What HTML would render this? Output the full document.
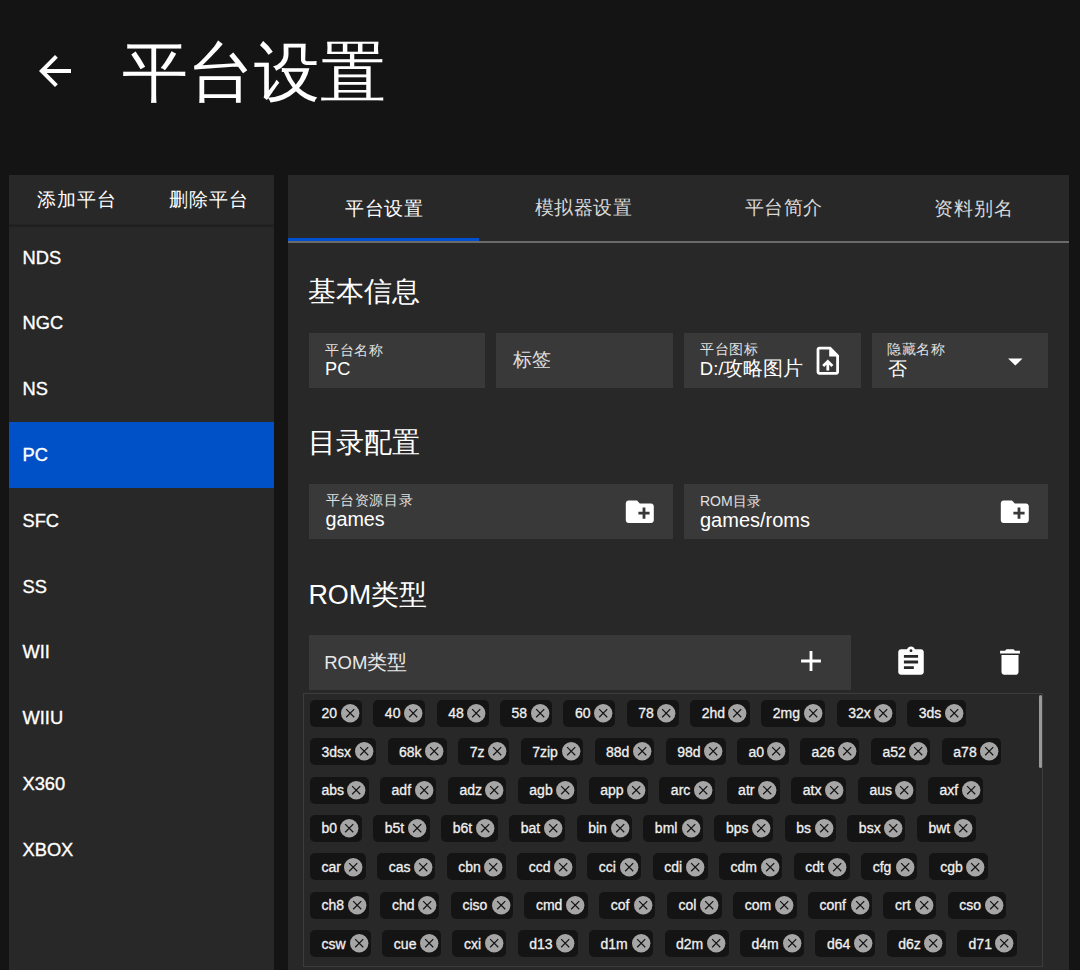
<!DOCTYPE html><html><head><meta charset="utf-8"><style>
html,body{margin:0;padding:0;width:1080px;height:970px;overflow:hidden;background:#141414;font-family:"Liberation Sans",sans-serif;}
.t{position:absolute;white-space:nowrap;line-height:1;}
.r{position:absolute;}
svg{position:absolute;overflow:visible}
</style></head><body>
<div class="r" style="left:9px;top:175px;width:265px;height:800px;background:#282828"></div>
<div class="r" style="left:9px;top:226px;width:265px;height:800px;background:#282828"></div>
<div class="r" style="left:9px;top:224px;width:265px;height:4px;background:linear-gradient(#262626,#1e1e1e 40%,#232323 70%,#282828)"></div>
<div class="r" style="left:288px;top:175px;width:781px;height:800px;background:#282828"></div>
<div class="r" style="left:9px;top:422px;width:265px;height:66px;background:#0050c8"></div>
<div class="r" style="left:288px;top:241px;width:781px;height:2px;background:#6a6a6a"></div>
<div class="r" style="left:288px;top:238px;width:191px;height:3px;background:#0050d0"></div>
<div class="r" style="left:309px;top:333px;width:176px;height:55px;background:#393939"></div>
<div class="r" style="left:496px;top:333px;width:177px;height:55px;background:#393939"></div>
<div class="r" style="left:684px;top:333px;width:177px;height:55px;background:#393939"></div>
<div class="r" style="left:872px;top:333px;width:176px;height:55px;background:#393939"></div>
<div class="r" style="left:309px;top:484px;width:364px;height:55px;background:#393939"></div>
<div class="r" style="left:684px;top:484px;width:364px;height:55px;background:#393939"></div>
<div class="r" style="left:309px;top:635px;width:542px;height:55px;background:#393939"></div>
<div class="r" style="left:303px;top:693px;width:738px;height:272px;border:1px solid #3c3c3c"></div>
<div class="r" style="left:1039px;top:695px;width:3px;height:73px;border-radius:1.5px;background:#999"></div>
<div class="t" style="left:122.20px;top:39.10px;font-size:66px;font-weight:400;color:#fff;letter-spacing:0px">平台设置</div>
<div class="t" style="left:37.10px;top:190.35px;font-size:19px;font-weight:400;color:#fff;letter-spacing:1.0px">添加平台</div>
<div class="t" style="left:169.00px;top:190.45px;font-size:19px;font-weight:400;color:#fff;letter-spacing:1.0px">删除平台</div>
<div class="t" style="left:22.50px;top:248.58px;font-size:18.3px;font-weight:500;color:#fff;letter-spacing:0px;-webkit-text-stroke:0.35px #fff">NDS</div>
<div class="t" style="left:22.50px;top:314.38px;font-size:18.3px;font-weight:500;color:#fff;letter-spacing:0px;-webkit-text-stroke:0.35px #fff">NGC</div>
<div class="t" style="left:22.50px;top:380.18px;font-size:18.3px;font-weight:500;color:#fff;letter-spacing:0px;-webkit-text-stroke:0.35px #fff">NS</div>
<div class="t" style="left:22.50px;top:445.98px;font-size:18.3px;font-weight:500;color:#fff;letter-spacing:0px;-webkit-text-stroke:0.35px #fff">PC</div>
<div class="t" style="left:22.50px;top:511.78px;font-size:18.3px;font-weight:500;color:#fff;letter-spacing:0px;-webkit-text-stroke:0.35px #fff">SFC</div>
<div class="t" style="left:22.50px;top:577.58px;font-size:18.3px;font-weight:500;color:#fff;letter-spacing:0px;-webkit-text-stroke:0.35px #fff">SS</div>
<div class="t" style="left:22.50px;top:643.38px;font-size:18.3px;font-weight:500;color:#fff;letter-spacing:0px;-webkit-text-stroke:0.35px #fff">WII</div>
<div class="t" style="left:22.50px;top:709.18px;font-size:18.3px;font-weight:500;color:#fff;letter-spacing:0px;-webkit-text-stroke:0.35px #fff">WIIU</div>
<div class="t" style="left:22.50px;top:774.98px;font-size:18.3px;font-weight:500;color:#fff;letter-spacing:0px;-webkit-text-stroke:0.35px #fff">X360</div>
<div class="t" style="left:22.50px;top:840.78px;font-size:18.3px;font-weight:500;color:#fff;letter-spacing:0px;-webkit-text-stroke:0.35px #fff">XBOX</div>
<div class="t" style="left:345.00px;top:199.40px;font-size:19px;font-weight:400;color:#fff;letter-spacing:0.57px">平台设置</div>
<div class="t" style="left:534.70px;top:198.40px;font-size:19px;font-weight:400;color:#d8d8d8;letter-spacing:0.47px">模拟器设置</div>
<div class="t" style="left:744.80px;top:198.40px;font-size:19px;font-weight:400;color:#d8d8d8;letter-spacing:0.37px">平台简介</div>
<div class="t" style="left:934.40px;top:198.90px;font-size:19px;font-weight:400;color:#d8d8d8;letter-spacing:0.8px">资料别名</div>
<div class="t" style="left:307.60px;top:278.30px;font-size:28px;font-weight:400;color:#fff;letter-spacing:0px">基本信息</div>
<div class="t" style="left:308.00px;top:429.10px;font-size:28px;font-weight:400;color:#fff;letter-spacing:0px">目录配置</div>
<div class="t" style="left:308.40px;top:580.70px;font-size:26.98px;font-weight:400;color:#fff;letter-spacing:0px">ROM<span style="font-size:28px">类型</span></div>
<div class="t" style="left:325.20px;top:342.60px;font-size:14px;font-weight:400;color:#e0e0e0;letter-spacing:0.6px">平台名称</div>
<div class="t" style="left:325.00px;top:360.00px;font-size:18.19px;font-weight:400;color:#fff;letter-spacing:0px">PC</div>
<div class="t" style="left:512.60px;top:349.80px;font-size:19px;font-weight:400;color:#e0e0e0;letter-spacing:0px">标签</div>
<div class="t" style="left:700.00px;top:341.90px;font-size:14px;font-weight:400;color:#e0e0e0;letter-spacing:0.6px">平台图标</div>
<div class="t" style="left:699.80px;top:358.30px;font-size:18.5px;font-weight:400;color:#fff;letter-spacing:0px">D:/<span style="font-size:20px">攻略图片</span></div>
<div class="t" style="left:887.30px;top:342.35px;font-size:14px;font-weight:400;color:#e0e0e0;letter-spacing:0.6px">隐藏名称</div>
<div class="t" style="left:888.00px;top:359.10px;font-size:19px;font-weight:400;color:#fff;letter-spacing:0px">否</div>
<div class="t" style="left:325.60px;top:493.10px;font-size:14px;font-weight:400;color:#e0e0e0;letter-spacing:0.6px">平台资源目录</div>
<div class="t" style="left:325.40px;top:509.80px;font-size:19.77px;font-weight:400;color:#fff;letter-spacing:0px">games</div>
<div class="t" style="left:700.00px;top:493.90px;font-size:14px;font-weight:400;color:#e0e0e0;letter-spacing:0px">ROM<span style="font-size:14px">目录</span></div>
<div class="t" style="left:700.00px;top:510.20px;font-size:20px;font-weight:400;color:#fff;letter-spacing:0px">games/roms</div>
<div class="t" style="left:324.20px;top:651.90px;font-size:18.5px;font-weight:400;color:#e8e8e8;letter-spacing:0px">ROM<span style="font-size:20px">类型</span></div>
<svg style="left:31.00px;top:47.00px" width="48.00" height="48.00" viewBox="0 0 24 24"><path fill="#fff" d="M20 11H7.83l5.59-5.59L12 4l-8 8 8 8 1.41-1.41L7.83 13H20v-2z"/></svg>
<svg style="left:810.50px;top:344.10px" width="33.60" height="33.60" viewBox="0 0 24 24"><path fill="#fff" d="M14 2H6c-1.1 0-1.99.9-1.99 2L4 20c0 1.1.89 2 1.99 2H18c1.1 0 2-.9 2-2V8l-6-6zm4 18H6V4h7v5h5v11zM8 15.01l1.41 1.41L11 14.84V19h2v-4.16l1.59 1.59L16 15.01 12.01 11 8 15.01z"/></svg>
<svg style="left:623.10px;top:494.60px" width="33.60" height="33.60" viewBox="0 0 24 24"><path fill="#fff" d="M20 6h-8l-2-2H4c-1.11 0-1.99.89-1.99 2L2 18c0 1.11.89 2 2 2h16c1.11 0 2-.89 2-2V8c0-1.11-.89-2-2-2zm-1 8h-3v3h-2v-3h-3v-2h3V9h2v3h3v2z"/></svg>
<svg style="left:997.90px;top:494.60px" width="33.60" height="33.60" viewBox="0 0 24 24"><path fill="#fff" d="M20 6h-8l-2-2H4c-1.11 0-1.99.89-1.99 2L2 18c0 1.11.89 2 2 2h16c1.11 0 2-.89 2-2V8c0-1.11-.89-2-2-2zm-1 8h-3v3h-2v-3h-3v-2h3V9h2v3h3v2z"/></svg>
<svg style="left:997.90px;top:344.00px" width="34.60" height="34.60" viewBox="0 0 24 24"><path fill="#fff" d="M7 10l5 5 5-5z"/></svg>
<svg style="left:794.40px;top:644.30px" width="34.00" height="34.00" viewBox="0 0 24 24"><path fill="#fff" d="M19 13h-6v6h-2v-6H5v-2h6V5h2v6h6v2z"/></svg>
<svg style="left:894.00px;top:644.60px" width="34.00" height="34.00" viewBox="0 0 24 24"><path fill="#fff" d="M19 3h-4.18C14.4 1.84 13.3 1 12 1c-1.3 0-2.4.84-2.82 2H5c-1.1 0-2 .9-2 2v14c0 1.1.9 2 2 2h14c1.1 0 2-.9 2-2V5c0-1.1-.9-2-2-2zm-7 0c.55 0 1 .45 1 1s-.45 1-1 1-1-.45-1-1 .45-1 1-1zm2 14H7v-2h7v2zm3-4H7v-2h10v2zm0-4H7V7h10v2z"/></svg>
<svg style="left:992.90px;top:645.20px" width="34.00" height="34.00" viewBox="0 0 24 24"><path fill="#fff" d="M6 19c0 1.1.9 2 2 2h8c1.1 0 2-.9 2-2V7H6v12zM19 4h-3.5l-1-1h-5l-1 1H5v2h14V4z"/></svg>
<div class="r" style="left:310.00px;top:699.80px;width:51.91px;height:27px;border-radius:5px;background:#141414"></div>
<div class="t" style="left:321.50px;top:706.30px;font-size:14px;font-weight:400;letter-spacing:0px;-webkit-text-stroke:0.3px #f0f0f0;color:#f0f0f0">20</div>
<svg style="left:340.51px;top:704.10px" width="18.4" height="18.4" viewBox="0 0 20 20"><circle cx="10" cy="10" r="10" fill="#a6a6a6"/><path d="M5.6 5.6L14.4 14.4M14.4 5.6L5.6 14.4" stroke="#141414" stroke-width="1.3"/></svg>
<div class="r" style="left:373.36px;top:699.80px;width:51.91px;height:27px;border-radius:5px;background:#141414"></div>
<div class="t" style="left:384.86px;top:706.30px;font-size:14px;font-weight:400;letter-spacing:0px;-webkit-text-stroke:0.3px #f0f0f0;color:#f0f0f0">40</div>
<svg style="left:403.88px;top:704.10px" width="18.4" height="18.4" viewBox="0 0 20 20"><circle cx="10" cy="10" r="10" fill="#a6a6a6"/><path d="M5.6 5.6L14.4 14.4M14.4 5.6L5.6 14.4" stroke="#141414" stroke-width="1.3"/></svg>
<div class="r" style="left:436.73px;top:699.80px;width:51.91px;height:27px;border-radius:5px;background:#141414"></div>
<div class="t" style="left:448.23px;top:706.30px;font-size:14px;font-weight:400;letter-spacing:0px;-webkit-text-stroke:0.3px #f0f0f0;color:#f0f0f0">48</div>
<svg style="left:467.24px;top:704.10px" width="18.4" height="18.4" viewBox="0 0 20 20"><circle cx="10" cy="10" r="10" fill="#a6a6a6"/><path d="M5.6 5.6L14.4 14.4M14.4 5.6L5.6 14.4" stroke="#141414" stroke-width="1.3"/></svg>
<div class="r" style="left:500.09px;top:699.80px;width:51.91px;height:27px;border-radius:5px;background:#141414"></div>
<div class="t" style="left:511.59px;top:706.30px;font-size:14px;font-weight:400;letter-spacing:0px;-webkit-text-stroke:0.3px #f0f0f0;color:#f0f0f0">58</div>
<svg style="left:530.61px;top:704.10px" width="18.4" height="18.4" viewBox="0 0 20 20"><circle cx="10" cy="10" r="10" fill="#a6a6a6"/><path d="M5.6 5.6L14.4 14.4M14.4 5.6L5.6 14.4" stroke="#141414" stroke-width="1.3"/></svg>
<div class="r" style="left:563.46px;top:699.80px;width:51.91px;height:27px;border-radius:5px;background:#141414"></div>
<div class="t" style="left:574.96px;top:706.30px;font-size:14px;font-weight:400;letter-spacing:0px;-webkit-text-stroke:0.3px #f0f0f0;color:#f0f0f0">60</div>
<svg style="left:593.97px;top:704.10px" width="18.4" height="18.4" viewBox="0 0 20 20"><circle cx="10" cy="10" r="10" fill="#a6a6a6"/><path d="M5.6 5.6L14.4 14.4M14.4 5.6L5.6 14.4" stroke="#141414" stroke-width="1.3"/></svg>
<div class="r" style="left:626.82px;top:699.80px;width:51.91px;height:27px;border-radius:5px;background:#141414"></div>
<div class="t" style="left:638.32px;top:706.30px;font-size:14px;font-weight:400;letter-spacing:0px;-webkit-text-stroke:0.3px #f0f0f0;color:#f0f0f0">78</div>
<svg style="left:657.33px;top:704.10px" width="18.4" height="18.4" viewBox="0 0 20 20"><circle cx="10" cy="10" r="10" fill="#a6a6a6"/><path d="M5.6 5.6L14.4 14.4M14.4 5.6L5.6 14.4" stroke="#141414" stroke-width="1.3"/></svg>
<div class="r" style="left:690.18px;top:699.80px;width:59.62px;height:27px;border-radius:5px;background:#141414"></div>
<div class="t" style="left:701.68px;top:706.30px;font-size:14px;font-weight:400;letter-spacing:0px;-webkit-text-stroke:0.3px #f0f0f0;color:#f0f0f0">2hd</div>
<svg style="left:728.41px;top:704.10px" width="18.4" height="18.4" viewBox="0 0 20 20"><circle cx="10" cy="10" r="10" fill="#a6a6a6"/><path d="M5.6 5.6L14.4 14.4M14.4 5.6L5.6 14.4" stroke="#141414" stroke-width="1.3"/></svg>
<div class="r" style="left:761.26px;top:699.80px;width:64.09px;height:27px;border-radius:5px;background:#141414"></div>
<div class="t" style="left:772.76px;top:706.30px;font-size:14px;font-weight:400;letter-spacing:0px;-webkit-text-stroke:0.3px #f0f0f0;color:#f0f0f0">2mg</div>
<svg style="left:803.95px;top:704.10px" width="18.4" height="18.4" viewBox="0 0 20 20"><circle cx="10" cy="10" r="10" fill="#a6a6a6"/><path d="M5.6 5.6L14.4 14.4M14.4 5.6L5.6 14.4" stroke="#141414" stroke-width="1.3"/></svg>
<div class="r" style="left:836.80px;top:699.80px;width:58.96px;height:27px;border-radius:5px;background:#141414"></div>
<div class="t" style="left:848.30px;top:706.30px;font-size:14px;font-weight:400;letter-spacing:0px;-webkit-text-stroke:0.3px #f0f0f0;color:#f0f0f0">32x</div>
<svg style="left:874.35px;top:704.10px" width="18.4" height="18.4" viewBox="0 0 20 20"><circle cx="10" cy="10" r="10" fill="#a6a6a6"/><path d="M5.6 5.6L14.4 14.4M14.4 5.6L5.6 14.4" stroke="#141414" stroke-width="1.3"/></svg>
<div class="r" style="left:907.20px;top:699.80px;width:59.05px;height:27px;border-radius:5px;background:#141414"></div>
<div class="t" style="left:918.70px;top:706.30px;font-size:14px;font-weight:400;letter-spacing:0px;-webkit-text-stroke:0.3px #f0f0f0;color:#f0f0f0">3ds</div>
<svg style="left:944.85px;top:704.10px" width="18.4" height="18.4" viewBox="0 0 20 20"><circle cx="10" cy="10" r="10" fill="#a6a6a6"/><path d="M5.6 5.6L14.4 14.4M14.4 5.6L5.6 14.4" stroke="#141414" stroke-width="1.3"/></svg>
<div class="r" style="left:310.00px;top:738.17px;width:66.09px;height:27px;border-radius:5px;background:#141414"></div>
<div class="t" style="left:321.50px;top:744.67px;font-size:14px;font-weight:400;letter-spacing:0px;-webkit-text-stroke:0.3px #f0f0f0;color:#f0f0f0">3dsx</div>
<svg style="left:354.69px;top:742.47px" width="18.4" height="18.4" viewBox="0 0 20 20"><circle cx="10" cy="10" r="10" fill="#a6a6a6"/><path d="M5.6 5.6L14.4 14.4M14.4 5.6L5.6 14.4" stroke="#141414" stroke-width="1.3"/></svg>
<div class="r" style="left:387.54px;top:738.17px;width:59.21px;height:27px;border-radius:5px;background:#141414"></div>
<div class="t" style="left:399.04px;top:744.67px;font-size:14px;font-weight:400;letter-spacing:0px;-webkit-text-stroke:0.3px #f0f0f0;color:#f0f0f0">68k</div>
<svg style="left:425.36px;top:742.47px" width="18.4" height="18.4" viewBox="0 0 20 20"><circle cx="10" cy="10" r="10" fill="#a6a6a6"/><path d="M5.6 5.6L14.4 14.4M14.4 5.6L5.6 14.4" stroke="#141414" stroke-width="1.3"/></svg>
<div class="r" style="left:458.21px;top:738.17px;width:51.00px;height:27px;border-radius:5px;background:#141414"></div>
<div class="t" style="left:469.71px;top:744.67px;font-size:14px;font-weight:400;letter-spacing:0px;-webkit-text-stroke:0.3px #f0f0f0;color:#f0f0f0">7z</div>
<svg style="left:487.80px;top:742.47px" width="18.4" height="18.4" viewBox="0 0 20 20"><circle cx="10" cy="10" r="10" fill="#a6a6a6"/><path d="M5.6 5.6L14.4 14.4M14.4 5.6L5.6 14.4" stroke="#141414" stroke-width="1.3"/></svg>
<div class="r" style="left:520.65px;top:738.17px;width:62.43px;height:27px;border-radius:5px;background:#141414"></div>
<div class="t" style="left:532.15px;top:744.67px;font-size:14px;font-weight:400;letter-spacing:0px;-webkit-text-stroke:0.3px #f0f0f0;color:#f0f0f0">7zip</div>
<svg style="left:561.69px;top:742.47px" width="18.4" height="18.4" viewBox="0 0 20 20"><circle cx="10" cy="10" r="10" fill="#a6a6a6"/><path d="M5.6 5.6L14.4 14.4M14.4 5.6L5.6 14.4" stroke="#141414" stroke-width="1.3"/></svg>
<div class="r" style="left:594.54px;top:738.17px;width:59.80px;height:27px;border-radius:5px;background:#141414"></div>
<div class="t" style="left:606.04px;top:744.67px;font-size:14px;font-weight:400;letter-spacing:0px;-webkit-text-stroke:0.3px #f0f0f0;color:#f0f0f0">88d</div>
<svg style="left:632.94px;top:742.47px" width="18.4" height="18.4" viewBox="0 0 20 20"><circle cx="10" cy="10" r="10" fill="#a6a6a6"/><path d="M5.6 5.6L14.4 14.4M14.4 5.6L5.6 14.4" stroke="#141414" stroke-width="1.3"/></svg>
<div class="r" style="left:665.79px;top:738.17px;width:59.80px;height:27px;border-radius:5px;background:#141414"></div>
<div class="t" style="left:677.29px;top:744.67px;font-size:14px;font-weight:400;letter-spacing:0px;-webkit-text-stroke:0.3px #f0f0f0;color:#f0f0f0">98d</div>
<svg style="left:704.19px;top:742.47px" width="18.4" height="18.4" viewBox="0 0 20 20"><circle cx="10" cy="10" r="10" fill="#a6a6a6"/><path d="M5.6 5.6L14.4 14.4M14.4 5.6L5.6 14.4" stroke="#141414" stroke-width="1.3"/></svg>
<div class="r" style="left:737.04px;top:738.17px;width:51.50px;height:27px;border-radius:5px;background:#141414"></div>
<div class="t" style="left:748.54px;top:744.67px;font-size:14px;font-weight:400;letter-spacing:0px;-webkit-text-stroke:0.3px #f0f0f0;color:#f0f0f0">a0</div>
<svg style="left:767.15px;top:742.47px" width="18.4" height="18.4" viewBox="0 0 20 20"><circle cx="10" cy="10" r="10" fill="#a6a6a6"/><path d="M5.6 5.6L14.4 14.4M14.4 5.6L5.6 14.4" stroke="#141414" stroke-width="1.3"/></svg>
<div class="r" style="left:800.00px;top:738.17px;width:59.46px;height:27px;border-radius:5px;background:#141414"></div>
<div class="t" style="left:811.50px;top:744.67px;font-size:14px;font-weight:400;letter-spacing:0px;-webkit-text-stroke:0.3px #f0f0f0;color:#f0f0f0">a26</div>
<svg style="left:838.06px;top:742.47px" width="18.4" height="18.4" viewBox="0 0 20 20"><circle cx="10" cy="10" r="10" fill="#a6a6a6"/><path d="M5.6 5.6L14.4 14.4M14.4 5.6L5.6 14.4" stroke="#141414" stroke-width="1.3"/></svg>
<div class="r" style="left:870.91px;top:738.17px;width:59.46px;height:27px;border-radius:5px;background:#141414"></div>
<div class="t" style="left:882.41px;top:744.67px;font-size:14px;font-weight:400;letter-spacing:0px;-webkit-text-stroke:0.3px #f0f0f0;color:#f0f0f0">a52</div>
<svg style="left:908.97px;top:742.47px" width="18.4" height="18.4" viewBox="0 0 20 20"><circle cx="10" cy="10" r="10" fill="#a6a6a6"/><path d="M5.6 5.6L14.4 14.4M14.4 5.6L5.6 14.4" stroke="#141414" stroke-width="1.3"/></svg>
<div class="r" style="left:941.82px;top:738.17px;width:59.46px;height:27px;border-radius:5px;background:#141414"></div>
<div class="t" style="left:953.32px;top:744.67px;font-size:14px;font-weight:400;letter-spacing:0px;-webkit-text-stroke:0.3px #f0f0f0;color:#f0f0f0">a78</div>
<svg style="left:979.88px;top:742.47px" width="18.4" height="18.4" viewBox="0 0 20 20"><circle cx="10" cy="10" r="10" fill="#a6a6a6"/><path d="M5.6 5.6L14.4 14.4M14.4 5.6L5.6 14.4" stroke="#141414" stroke-width="1.3"/></svg>
<div class="r" style="left:310.00px;top:776.54px;width:58.62px;height:27px;border-radius:5px;background:#141414"></div>
<div class="t" style="left:321.50px;top:783.04px;font-size:14px;font-weight:400;letter-spacing:0px;-webkit-text-stroke:0.3px #f0f0f0;color:#f0f0f0">abs</div>
<svg style="left:347.22px;top:780.84px" width="18.4" height="18.4" viewBox="0 0 20 20"><circle cx="10" cy="10" r="10" fill="#a6a6a6"/><path d="M5.6 5.6L14.4 14.4M14.4 5.6L5.6 14.4" stroke="#141414" stroke-width="1.3"/></svg>
<div class="r" style="left:380.07px;top:776.54px;width:56.38px;height:27px;border-radius:5px;background:#141414"></div>
<div class="t" style="left:391.57px;top:783.04px;font-size:14px;font-weight:400;letter-spacing:0px;-webkit-text-stroke:0.3px #f0f0f0;color:#f0f0f0">adf</div>
<svg style="left:415.05px;top:780.84px" width="18.4" height="18.4" viewBox="0 0 20 20"><circle cx="10" cy="10" r="10" fill="#a6a6a6"/><path d="M5.6 5.6L14.4 14.4M14.4 5.6L5.6 14.4" stroke="#141414" stroke-width="1.3"/></svg>
<div class="r" style="left:447.90px;top:776.54px;width:58.48px;height:27px;border-radius:5px;background:#141414"></div>
<div class="t" style="left:459.40px;top:783.04px;font-size:14px;font-weight:400;letter-spacing:0px;-webkit-text-stroke:0.3px #f0f0f0;color:#f0f0f0">adz</div>
<svg style="left:484.97px;top:780.84px" width="18.4" height="18.4" viewBox="0 0 20 20"><circle cx="10" cy="10" r="10" fill="#a6a6a6"/><path d="M5.6 5.6L14.4 14.4M14.4 5.6L5.6 14.4" stroke="#141414" stroke-width="1.3"/></svg>
<div class="r" style="left:517.82px;top:776.54px;width:59.35px;height:27px;border-radius:5px;background:#141414"></div>
<div class="t" style="left:529.32px;top:783.04px;font-size:14px;font-weight:400;letter-spacing:0px;-webkit-text-stroke:0.3px #f0f0f0;color:#f0f0f0">agb</div>
<svg style="left:555.78px;top:780.84px" width="18.4" height="18.4" viewBox="0 0 20 20"><circle cx="10" cy="10" r="10" fill="#a6a6a6"/><path d="M5.6 5.6L14.4 14.4M14.4 5.6L5.6 14.4" stroke="#141414" stroke-width="1.3"/></svg>
<div class="r" style="left:588.63px;top:776.54px;width:59.28px;height:27px;border-radius:5px;background:#141414"></div>
<div class="t" style="left:600.13px;top:783.04px;font-size:14px;font-weight:400;letter-spacing:0px;-webkit-text-stroke:0.3px #f0f0f0;color:#f0f0f0">app</div>
<svg style="left:626.51px;top:780.84px" width="18.4" height="18.4" viewBox="0 0 20 20"><circle cx="10" cy="10" r="10" fill="#a6a6a6"/><path d="M5.6 5.6L14.4 14.4M14.4 5.6L5.6 14.4" stroke="#141414" stroke-width="1.3"/></svg>
<div class="r" style="left:659.36px;top:776.54px;width:55.80px;height:27px;border-radius:5px;background:#141414"></div>
<div class="t" style="left:670.86px;top:783.04px;font-size:14px;font-weight:400;letter-spacing:0px;-webkit-text-stroke:0.3px #f0f0f0;color:#f0f0f0">arc</div>
<svg style="left:693.76px;top:780.84px" width="18.4" height="18.4" viewBox="0 0 20 20"><circle cx="10" cy="10" r="10" fill="#a6a6a6"/><path d="M5.6 5.6L14.4 14.4M14.4 5.6L5.6 14.4" stroke="#141414" stroke-width="1.3"/></svg>
<div class="r" style="left:726.61px;top:776.54px;width:53.16px;height:27px;border-radius:5px;background:#141414"></div>
<div class="t" style="left:738.11px;top:783.04px;font-size:14px;font-weight:400;letter-spacing:0px;-webkit-text-stroke:0.3px #f0f0f0;color:#f0f0f0">atr</div>
<svg style="left:758.37px;top:780.84px" width="18.4" height="18.4" viewBox="0 0 20 20"><circle cx="10" cy="10" r="10" fill="#a6a6a6"/><path d="M5.6 5.6L14.4 14.4M14.4 5.6L5.6 14.4" stroke="#141414" stroke-width="1.3"/></svg>
<div class="r" style="left:791.22px;top:776.54px;width:55.25px;height:27px;border-radius:5px;background:#141414"></div>
<div class="t" style="left:802.72px;top:783.04px;font-size:14px;font-weight:400;letter-spacing:0px;-webkit-text-stroke:0.3px #f0f0f0;color:#f0f0f0">atx</div>
<svg style="left:825.07px;top:780.84px" width="18.4" height="18.4" viewBox="0 0 20 20"><circle cx="10" cy="10" r="10" fill="#a6a6a6"/><path d="M5.6 5.6L14.4 14.4M14.4 5.6L5.6 14.4" stroke="#141414" stroke-width="1.3"/></svg>
<div class="r" style="left:857.92px;top:776.54px;width:58.54px;height:27px;border-radius:5px;background:#141414"></div>
<div class="t" style="left:869.42px;top:783.04px;font-size:14px;font-weight:400;letter-spacing:0px;-webkit-text-stroke:0.3px #f0f0f0;color:#f0f0f0">aus</div>
<svg style="left:895.06px;top:780.84px" width="18.4" height="18.4" viewBox="0 0 20 20"><circle cx="10" cy="10" r="10" fill="#a6a6a6"/><path d="M5.6 5.6L14.4 14.4M14.4 5.6L5.6 14.4" stroke="#141414" stroke-width="1.3"/></svg>
<div class="r" style="left:927.91px;top:776.54px;width:55.53px;height:27px;border-radius:5px;background:#141414"></div>
<div class="t" style="left:939.41px;top:783.04px;font-size:14px;font-weight:400;letter-spacing:0px;-webkit-text-stroke:0.3px #f0f0f0;color:#f0f0f0">axf</div>
<svg style="left:962.04px;top:780.84px" width="18.4" height="18.4" viewBox="0 0 20 20"><circle cx="10" cy="10" r="10" fill="#a6a6a6"/><path d="M5.6 5.6L14.4 14.4M14.4 5.6L5.6 14.4" stroke="#141414" stroke-width="1.3"/></svg>
<div class="r" style="left:310.00px;top:814.91px;width:51.83px;height:27px;border-radius:5px;background:#141414"></div>
<div class="t" style="left:321.50px;top:821.41px;font-size:14px;font-weight:400;letter-spacing:0px;-webkit-text-stroke:0.3px #f0f0f0;color:#f0f0f0">b0</div>
<svg style="left:340.43px;top:819.21px" width="18.4" height="18.4" viewBox="0 0 20 20"><circle cx="10" cy="10" r="10" fill="#a6a6a6"/><path d="M5.6 5.6L14.4 14.4M14.4 5.6L5.6 14.4" stroke="#141414" stroke-width="1.3"/></svg>
<div class="r" style="left:373.28px;top:814.91px;width:56.49px;height:27px;border-radius:5px;background:#141414"></div>
<div class="t" style="left:384.78px;top:821.41px;font-size:14px;font-weight:400;letter-spacing:0px;-webkit-text-stroke:0.3px #f0f0f0;color:#f0f0f0">b5t</div>
<svg style="left:408.36px;top:819.21px" width="18.4" height="18.4" viewBox="0 0 20 20"><circle cx="10" cy="10" r="10" fill="#a6a6a6"/><path d="M5.6 5.6L14.4 14.4M14.4 5.6L5.6 14.4" stroke="#141414" stroke-width="1.3"/></svg>
<div class="r" style="left:441.21px;top:814.91px;width:56.49px;height:27px;border-radius:5px;background:#141414"></div>
<div class="t" style="left:452.71px;top:821.41px;font-size:14px;font-weight:400;letter-spacing:0px;-webkit-text-stroke:0.3px #f0f0f0;color:#f0f0f0">b6t</div>
<svg style="left:476.30px;top:819.21px" width="18.4" height="18.4" viewBox="0 0 20 20"><circle cx="10" cy="10" r="10" fill="#a6a6a6"/><path d="M5.6 5.6L14.4 14.4M14.4 5.6L5.6 14.4" stroke="#141414" stroke-width="1.3"/></svg>
<div class="r" style="left:509.15px;top:814.91px;width:56.08px;height:27px;border-radius:5px;background:#141414"></div>
<div class="t" style="left:520.65px;top:821.41px;font-size:14px;font-weight:400;letter-spacing:0px;-webkit-text-stroke:0.3px #f0f0f0;color:#f0f0f0">bat</div>
<svg style="left:543.83px;top:819.21px" width="18.4" height="18.4" viewBox="0 0 20 20"><circle cx="10" cy="10" r="10" fill="#a6a6a6"/><path d="M5.6 5.6L14.4 14.4M14.4 5.6L5.6 14.4" stroke="#141414" stroke-width="1.3"/></svg>
<div class="r" style="left:576.68px;top:814.91px;width:55.23px;height:27px;border-radius:5px;background:#141414"></div>
<div class="t" style="left:588.18px;top:821.41px;font-size:14px;font-weight:400;letter-spacing:0px;-webkit-text-stroke:0.3px #f0f0f0;color:#f0f0f0">bin</div>
<svg style="left:610.51px;top:819.21px" width="18.4" height="18.4" viewBox="0 0 20 20"><circle cx="10" cy="10" r="10" fill="#a6a6a6"/><path d="M5.6 5.6L14.4 14.4M14.4 5.6L5.6 14.4" stroke="#141414" stroke-width="1.3"/></svg>
<div class="r" style="left:643.36px;top:814.91px;width:59.63px;height:27px;border-radius:5px;background:#141414"></div>
<div class="t" style="left:654.86px;top:821.41px;font-size:14px;font-weight:400;letter-spacing:0px;-webkit-text-stroke:0.3px #f0f0f0;color:#f0f0f0">bml</div>
<svg style="left:681.59px;top:819.21px" width="18.4" height="18.4" viewBox="0 0 20 20"><circle cx="10" cy="10" r="10" fill="#a6a6a6"/><path d="M5.6 5.6L14.4 14.4M14.4 5.6L5.6 14.4" stroke="#141414" stroke-width="1.3"/></svg>
<div class="r" style="left:714.44px;top:814.91px;width:58.94px;height:27px;border-radius:5px;background:#141414"></div>
<div class="t" style="left:725.94px;top:821.41px;font-size:14px;font-weight:400;letter-spacing:0px;-webkit-text-stroke:0.3px #f0f0f0;color:#f0f0f0">bps</div>
<svg style="left:751.98px;top:819.21px" width="18.4" height="18.4" viewBox="0 0 20 20"><circle cx="10" cy="10" r="10" fill="#a6a6a6"/><path d="M5.6 5.6L14.4 14.4M14.4 5.6L5.6 14.4" stroke="#141414" stroke-width="1.3"/></svg>
<div class="r" style="left:784.83px;top:814.91px;width:51.07px;height:27px;border-radius:5px;background:#141414"></div>
<div class="t" style="left:796.33px;top:821.41px;font-size:14px;font-weight:400;letter-spacing:0px;-webkit-text-stroke:0.3px #f0f0f0;color:#f0f0f0">bs</div>
<svg style="left:814.50px;top:819.21px" width="18.4" height="18.4" viewBox="0 0 20 20"><circle cx="10" cy="10" r="10" fill="#a6a6a6"/><path d="M5.6 5.6L14.4 14.4M14.4 5.6L5.6 14.4" stroke="#141414" stroke-width="1.3"/></svg>
<div class="r" style="left:847.35px;top:814.91px;width:58.11px;height:27px;border-radius:5px;background:#141414"></div>
<div class="t" style="left:858.85px;top:821.41px;font-size:14px;font-weight:400;letter-spacing:0px;-webkit-text-stroke:0.3px #f0f0f0;color:#f0f0f0">bsx</div>
<svg style="left:884.07px;top:819.21px" width="18.4" height="18.4" viewBox="0 0 20 20"><circle cx="10" cy="10" r="10" fill="#a6a6a6"/><path d="M5.6 5.6L14.4 14.4M14.4 5.6L5.6 14.4" stroke="#141414" stroke-width="1.3"/></svg>
<div class="r" style="left:916.92px;top:814.91px;width:58.92px;height:27px;border-radius:5px;background:#141414"></div>
<div class="t" style="left:928.42px;top:821.41px;font-size:14px;font-weight:400;letter-spacing:0px;-webkit-text-stroke:0.3px #f0f0f0;color:#f0f0f0">bwt</div>
<svg style="left:954.44px;top:819.21px" width="18.4" height="18.4" viewBox="0 0 20 20"><circle cx="10" cy="10" r="10" fill="#a6a6a6"/><path d="M5.6 5.6L14.4 14.4M14.4 5.6L5.6 14.4" stroke="#141414" stroke-width="1.3"/></svg>
<div class="r" style="left:310.00px;top:853.28px;width:55.80px;height:27px;border-radius:5px;background:#141414"></div>
<div class="t" style="left:321.50px;top:859.78px;font-size:14px;font-weight:400;letter-spacing:0px;-webkit-text-stroke:0.3px #f0f0f0;color:#f0f0f0">car</div>
<svg style="left:344.40px;top:857.58px" width="18.4" height="18.4" viewBox="0 0 20 20"><circle cx="10" cy="10" r="10" fill="#a6a6a6"/><path d="M5.6 5.6L14.4 14.4M14.4 5.6L5.6 14.4" stroke="#141414" stroke-width="1.3"/></svg>
<div class="r" style="left:377.25px;top:853.28px;width:58.06px;height:27px;border-radius:5px;background:#141414"></div>
<div class="t" style="left:388.75px;top:859.78px;font-size:14px;font-weight:400;letter-spacing:0px;-webkit-text-stroke:0.3px #f0f0f0;color:#f0f0f0">cas</div>
<svg style="left:413.91px;top:857.58px" width="18.4" height="18.4" viewBox="0 0 20 20"><circle cx="10" cy="10" r="10" fill="#a6a6a6"/><path d="M5.6 5.6L14.4 14.4M14.4 5.6L5.6 14.4" stroke="#141414" stroke-width="1.3"/></svg>
<div class="r" style="left:446.76px;top:853.28px;width:58.97px;height:27px;border-radius:5px;background:#141414"></div>
<div class="t" style="left:458.26px;top:859.78px;font-size:14px;font-weight:400;letter-spacing:0px;-webkit-text-stroke:0.3px #f0f0f0;color:#f0f0f0">cbn</div>
<svg style="left:484.33px;top:857.58px" width="18.4" height="18.4" viewBox="0 0 20 20"><circle cx="10" cy="10" r="10" fill="#a6a6a6"/><path d="M5.6 5.6L14.4 14.4M14.4 5.6L5.6 14.4" stroke="#141414" stroke-width="1.3"/></svg>
<div class="r" style="left:517.18px;top:853.28px;width:58.50px;height:27px;border-radius:5px;background:#141414"></div>
<div class="t" style="left:528.68px;top:859.78px;font-size:14px;font-weight:400;letter-spacing:0px;-webkit-text-stroke:0.3px #f0f0f0;color:#f0f0f0">ccd</div>
<svg style="left:554.29px;top:857.58px" width="18.4" height="18.4" viewBox="0 0 20 20"><circle cx="10" cy="10" r="10" fill="#a6a6a6"/><path d="M5.6 5.6L14.4 14.4M14.4 5.6L5.6 14.4" stroke="#141414" stroke-width="1.3"/></svg>
<div class="r" style="left:587.14px;top:853.28px;width:54.18px;height:27px;border-radius:5px;background:#141414"></div>
<div class="t" style="left:598.64px;top:859.78px;font-size:14px;font-weight:400;letter-spacing:0px;-webkit-text-stroke:0.3px #f0f0f0;color:#f0f0f0">cci</div>
<svg style="left:619.92px;top:857.58px" width="18.4" height="18.4" viewBox="0 0 20 20"><circle cx="10" cy="10" r="10" fill="#a6a6a6"/><path d="M5.6 5.6L14.4 14.4M14.4 5.6L5.6 14.4" stroke="#141414" stroke-width="1.3"/></svg>
<div class="r" style="left:652.77px;top:853.28px;width:54.76px;height:27px;border-radius:5px;background:#141414"></div>
<div class="t" style="left:664.27px;top:859.78px;font-size:14px;font-weight:400;letter-spacing:0px;-webkit-text-stroke:0.3px #f0f0f0;color:#f0f0f0">cdi</div>
<svg style="left:686.13px;top:857.58px" width="18.4" height="18.4" viewBox="0 0 20 20"><circle cx="10" cy="10" r="10" fill="#a6a6a6"/><path d="M5.6 5.6L14.4 14.4M14.4 5.6L5.6 14.4" stroke="#141414" stroke-width="1.3"/></svg>
<div class="r" style="left:718.98px;top:853.28px;width:63.39px;height:27px;border-radius:5px;background:#141414"></div>
<div class="t" style="left:730.48px;top:859.78px;font-size:14px;font-weight:400;letter-spacing:0px;-webkit-text-stroke:0.3px #f0f0f0;color:#f0f0f0">cdm</div>
<svg style="left:760.98px;top:857.58px" width="18.4" height="18.4" viewBox="0 0 20 20"><circle cx="10" cy="10" r="10" fill="#a6a6a6"/><path d="M5.6 5.6L14.4 14.4M14.4 5.6L5.6 14.4" stroke="#141414" stroke-width="1.3"/></svg>
<div class="r" style="left:793.83px;top:853.28px;width:55.86px;height:27px;border-radius:5px;background:#141414"></div>
<div class="t" style="left:805.33px;top:859.78px;font-size:14px;font-weight:400;letter-spacing:0px;-webkit-text-stroke:0.3px #f0f0f0;color:#f0f0f0">cdt</div>
<svg style="left:828.28px;top:857.58px" width="18.4" height="18.4" viewBox="0 0 20 20"><circle cx="10" cy="10" r="10" fill="#a6a6a6"/><path d="M5.6 5.6L14.4 14.4M14.4 5.6L5.6 14.4" stroke="#141414" stroke-width="1.3"/></svg>
<div class="r" style="left:861.13px;top:853.28px;width:56.19px;height:27px;border-radius:5px;background:#141414"></div>
<div class="t" style="left:872.63px;top:859.78px;font-size:14px;font-weight:400;letter-spacing:0px;-webkit-text-stroke:0.3px #f0f0f0;color:#f0f0f0">cfg</div>
<svg style="left:895.92px;top:857.58px" width="18.4" height="18.4" viewBox="0 0 20 20"><circle cx="10" cy="10" r="10" fill="#a6a6a6"/><path d="M5.6 5.6L14.4 14.4M14.4 5.6L5.6 14.4" stroke="#141414" stroke-width="1.3"/></svg>
<div class="r" style="left:928.77px;top:853.28px;width:59.11px;height:27px;border-radius:5px;background:#141414"></div>
<div class="t" style="left:940.27px;top:859.78px;font-size:14px;font-weight:400;letter-spacing:0px;-webkit-text-stroke:0.3px #f0f0f0;color:#f0f0f0">cgb</div>
<svg style="left:966.48px;top:857.58px" width="18.4" height="18.4" viewBox="0 0 20 20"><circle cx="10" cy="10" r="10" fill="#a6a6a6"/><path d="M5.6 5.6L14.4 14.4M14.4 5.6L5.6 14.4" stroke="#141414" stroke-width="1.3"/></svg>
<div class="r" style="left:310.00px;top:891.65px;width:59.04px;height:27px;border-radius:5px;background:#141414"></div>
<div class="t" style="left:321.50px;top:898.15px;font-size:14px;font-weight:400;letter-spacing:0px;-webkit-text-stroke:0.3px #f0f0f0;color:#f0f0f0">ch8</div>
<svg style="left:347.64px;top:895.95px" width="18.4" height="18.4" viewBox="0 0 20 20"><circle cx="10" cy="10" r="10" fill="#a6a6a6"/><path d="M5.6 5.6L14.4 14.4M14.4 5.6L5.6 14.4" stroke="#141414" stroke-width="1.3"/></svg>
<div class="r" style="left:380.49px;top:891.65px;width:58.98px;height:27px;border-radius:5px;background:#141414"></div>
<div class="t" style="left:391.99px;top:898.15px;font-size:14px;font-weight:400;letter-spacing:0px;-webkit-text-stroke:0.3px #f0f0f0;color:#f0f0f0">chd</div>
<svg style="left:418.07px;top:895.95px" width="18.4" height="18.4" viewBox="0 0 20 20"><circle cx="10" cy="10" r="10" fill="#a6a6a6"/><path d="M5.6 5.6L14.4 14.4M14.4 5.6L5.6 14.4" stroke="#141414" stroke-width="1.3"/></svg>
<div class="r" style="left:450.92px;top:891.65px;width:62.02px;height:27px;border-radius:5px;background:#141414"></div>
<div class="t" style="left:462.42px;top:898.15px;font-size:14px;font-weight:400;letter-spacing:0px;-webkit-text-stroke:0.3px #f0f0f0;color:#f0f0f0">ciso</div>
<svg style="left:491.54px;top:895.95px" width="18.4" height="18.4" viewBox="0 0 20 20"><circle cx="10" cy="10" r="10" fill="#a6a6a6"/><path d="M5.6 5.6L14.4 14.4M14.4 5.6L5.6 14.4" stroke="#141414" stroke-width="1.3"/></svg>
<div class="r" style="left:524.39px;top:891.65px;width:63.39px;height:27px;border-radius:5px;background:#141414"></div>
<div class="t" style="left:535.89px;top:898.15px;font-size:14px;font-weight:400;letter-spacing:0px;-webkit-text-stroke:0.3px #f0f0f0;color:#f0f0f0">cmd</div>
<svg style="left:566.39px;top:895.95px" width="18.4" height="18.4" viewBox="0 0 20 20"><circle cx="10" cy="10" r="10" fill="#a6a6a6"/><path d="M5.6 5.6L14.4 14.4M14.4 5.6L5.6 14.4" stroke="#141414" stroke-width="1.3"/></svg>
<div class="r" style="left:599.24px;top:891.65px;width:56.19px;height:27px;border-radius:5px;background:#141414"></div>
<div class="t" style="left:610.74px;top:898.15px;font-size:14px;font-weight:400;letter-spacing:0px;-webkit-text-stroke:0.3px #f0f0f0;color:#f0f0f0">cof</div>
<svg style="left:634.03px;top:895.95px" width="18.4" height="18.4" viewBox="0 0 20 20"><circle cx="10" cy="10" r="10" fill="#a6a6a6"/><path d="M5.6 5.6L14.4 14.4M14.4 5.6L5.6 14.4" stroke="#141414" stroke-width="1.3"/></svg>
<div class="r" style="left:666.88px;top:891.65px;width:54.82px;height:27px;border-radius:5px;background:#141414"></div>
<div class="t" style="left:678.38px;top:898.15px;font-size:14px;font-weight:400;letter-spacing:0px;-webkit-text-stroke:0.3px #f0f0f0;color:#f0f0f0">col</div>
<svg style="left:700.30px;top:895.95px" width="18.4" height="18.4" viewBox="0 0 20 20"><circle cx="10" cy="10" r="10" fill="#a6a6a6"/><path d="M5.6 5.6L14.4 14.4M14.4 5.6L5.6 14.4" stroke="#141414" stroke-width="1.3"/></svg>
<div class="r" style="left:733.15px;top:891.65px;width:63.45px;height:27px;border-radius:5px;background:#141414"></div>
<div class="t" style="left:744.65px;top:898.15px;font-size:14px;font-weight:400;letter-spacing:0px;-webkit-text-stroke:0.3px #f0f0f0;color:#f0f0f0">com</div>
<svg style="left:775.19px;top:895.95px" width="18.4" height="18.4" viewBox="0 0 20 20"><circle cx="10" cy="10" r="10" fill="#a6a6a6"/><path d="M5.6 5.6L14.4 14.4M14.4 5.6L5.6 14.4" stroke="#141414" stroke-width="1.3"/></svg>
<div class="r" style="left:808.04px;top:891.65px;width:63.99px;height:27px;border-radius:5px;background:#141414"></div>
<div class="t" style="left:819.54px;top:898.15px;font-size:14px;font-weight:400;letter-spacing:0px;-webkit-text-stroke:0.3px #f0f0f0;color:#f0f0f0">conf</div>
<svg style="left:850.63px;top:895.95px" width="18.4" height="18.4" viewBox="0 0 20 20"><circle cx="10" cy="10" r="10" fill="#a6a6a6"/><path d="M5.6 5.6L14.4 14.4M14.4 5.6L5.6 14.4" stroke="#141414" stroke-width="1.3"/></svg>
<div class="r" style="left:883.48px;top:891.65px;width:52.92px;height:27px;border-radius:5px;background:#141414"></div>
<div class="t" style="left:894.98px;top:898.15px;font-size:14px;font-weight:400;letter-spacing:0px;-webkit-text-stroke:0.3px #f0f0f0;color:#f0f0f0">crt</div>
<svg style="left:915.00px;top:895.95px" width="18.4" height="18.4" viewBox="0 0 20 20"><circle cx="10" cy="10" r="10" fill="#a6a6a6"/><path d="M5.6 5.6L14.4 14.4M14.4 5.6L5.6 14.4" stroke="#141414" stroke-width="1.3"/></svg>
<div class="r" style="left:947.85px;top:891.65px;width:58.46px;height:27px;border-radius:5px;background:#141414"></div>
<div class="t" style="left:959.35px;top:898.15px;font-size:14px;font-weight:400;letter-spacing:0px;-webkit-text-stroke:0.3px #f0f0f0;color:#f0f0f0">cso</div>
<svg style="left:984.91px;top:895.95px" width="18.4" height="18.4" viewBox="0 0 20 20"><circle cx="10" cy="10" r="10" fill="#a6a6a6"/><path d="M5.6 5.6L14.4 14.4M14.4 5.6L5.6 14.4" stroke="#141414" stroke-width="1.3"/></svg>
<div class="r" style="left:310.00px;top:930.02px;width:60.90px;height:27px;border-radius:5px;background:#141414"></div>
<div class="t" style="left:321.50px;top:936.52px;font-size:14px;font-weight:400;letter-spacing:0px;-webkit-text-stroke:0.3px #f0f0f0;color:#f0f0f0">csw</div>
<svg style="left:349.50px;top:934.32px" width="18.4" height="18.4" viewBox="0 0 20 20"><circle cx="10" cy="10" r="10" fill="#a6a6a6"/><path d="M5.6 5.6L14.4 14.4M14.4 5.6L5.6 14.4" stroke="#141414" stroke-width="1.3"/></svg>
<div class="r" style="left:382.35px;top:930.02px;width:58.59px;height:27px;border-radius:5px;background:#141414"></div>
<div class="t" style="left:393.85px;top:936.52px;font-size:14px;font-weight:400;letter-spacing:0px;-webkit-text-stroke:0.3px #f0f0f0;color:#f0f0f0">cue</div>
<svg style="left:419.55px;top:934.32px" width="18.4" height="18.4" viewBox="0 0 20 20"><circle cx="10" cy="10" r="10" fill="#a6a6a6"/><path d="M5.6 5.6L14.4 14.4M14.4 5.6L5.6 14.4" stroke="#141414" stroke-width="1.3"/></svg>
<div class="r" style="left:452.40px;top:930.02px;width:53.92px;height:27px;border-radius:5px;background:#141414"></div>
<div class="t" style="left:463.90px;top:936.52px;font-size:14px;font-weight:400;letter-spacing:0px;-webkit-text-stroke:0.3px #f0f0f0;color:#f0f0f0">cxi</div>
<svg style="left:484.91px;top:934.32px" width="18.4" height="18.4" viewBox="0 0 20 20"><circle cx="10" cy="10" r="10" fill="#a6a6a6"/><path d="M5.6 5.6L14.4 14.4M14.4 5.6L5.6 14.4" stroke="#141414" stroke-width="1.3"/></svg>
<div class="r" style="left:517.76px;top:930.02px;width:59.80px;height:27px;border-radius:5px;background:#141414"></div>
<div class="t" style="left:529.26px;top:936.52px;font-size:14px;font-weight:400;letter-spacing:0px;-webkit-text-stroke:0.3px #f0f0f0;color:#f0f0f0">d13</div>
<svg style="left:556.17px;top:934.32px" width="18.4" height="18.4" viewBox="0 0 20 20"><circle cx="10" cy="10" r="10" fill="#a6a6a6"/><path d="M5.6 5.6L14.4 14.4M14.4 5.6L5.6 14.4" stroke="#141414" stroke-width="1.3"/></svg>
<div class="r" style="left:589.02px;top:930.02px;width:64.04px;height:27px;border-radius:5px;background:#141414"></div>
<div class="t" style="left:600.52px;top:936.52px;font-size:14px;font-weight:400;letter-spacing:0px;-webkit-text-stroke:0.3px #f0f0f0;color:#f0f0f0">d1m</div>
<svg style="left:631.66px;top:934.32px" width="18.4" height="18.4" viewBox="0 0 20 20"><circle cx="10" cy="10" r="10" fill="#a6a6a6"/><path d="M5.6 5.6L14.4 14.4M14.4 5.6L5.6 14.4" stroke="#141414" stroke-width="1.3"/></svg>
<div class="r" style="left:664.51px;top:930.02px;width:64.04px;height:27px;border-radius:5px;background:#141414"></div>
<div class="t" style="left:676.01px;top:936.52px;font-size:14px;font-weight:400;letter-spacing:0px;-webkit-text-stroke:0.3px #f0f0f0;color:#f0f0f0">d2m</div>
<svg style="left:707.15px;top:934.32px" width="18.4" height="18.4" viewBox="0 0 20 20"><circle cx="10" cy="10" r="10" fill="#a6a6a6"/><path d="M5.6 5.6L14.4 14.4M14.4 5.6L5.6 14.4" stroke="#141414" stroke-width="1.3"/></svg>
<div class="r" style="left:740.00px;top:930.02px;width:64.04px;height:27px;border-radius:5px;background:#141414"></div>
<div class="t" style="left:751.50px;top:936.52px;font-size:14px;font-weight:400;letter-spacing:0px;-webkit-text-stroke:0.3px #f0f0f0;color:#f0f0f0">d4m</div>
<svg style="left:782.64px;top:934.32px" width="18.4" height="18.4" viewBox="0 0 20 20"><circle cx="10" cy="10" r="10" fill="#a6a6a6"/><path d="M5.6 5.6L14.4 14.4M14.4 5.6L5.6 14.4" stroke="#141414" stroke-width="1.3"/></svg>
<div class="r" style="left:815.49px;top:930.02px;width:59.80px;height:27px;border-radius:5px;background:#141414"></div>
<div class="t" style="left:826.99px;top:936.52px;font-size:14px;font-weight:400;letter-spacing:0px;-webkit-text-stroke:0.3px #f0f0f0;color:#f0f0f0">d64</div>
<svg style="left:853.89px;top:934.32px" width="18.4" height="18.4" viewBox="0 0 20 20"><circle cx="10" cy="10" r="10" fill="#a6a6a6"/><path d="M5.6 5.6L14.4 14.4M14.4 5.6L5.6 14.4" stroke="#141414" stroke-width="1.3"/></svg>
<div class="r" style="left:886.74px;top:930.02px;width:58.89px;height:27px;border-radius:5px;background:#141414"></div>
<div class="t" style="left:898.24px;top:936.52px;font-size:14px;font-weight:400;letter-spacing:0px;-webkit-text-stroke:0.3px #f0f0f0;color:#f0f0f0">d6z</div>
<svg style="left:924.23px;top:934.32px" width="18.4" height="18.4" viewBox="0 0 20 20"><circle cx="10" cy="10" r="10" fill="#a6a6a6"/><path d="M5.6 5.6L14.4 14.4M14.4 5.6L5.6 14.4" stroke="#141414" stroke-width="1.3"/></svg>
<div class="r" style="left:957.08px;top:930.02px;width:59.80px;height:27px;border-radius:5px;background:#141414"></div>
<div class="t" style="left:968.58px;top:936.52px;font-size:14px;font-weight:400;letter-spacing:0px;-webkit-text-stroke:0.3px #f0f0f0;color:#f0f0f0">d71</div>
<svg style="left:995.48px;top:934.32px" width="18.4" height="18.4" viewBox="0 0 20 20"><circle cx="10" cy="10" r="10" fill="#a6a6a6"/><path d="M5.6 5.6L14.4 14.4M14.4 5.6L5.6 14.4" stroke="#141414" stroke-width="1.3"/></svg>
</body></html>
